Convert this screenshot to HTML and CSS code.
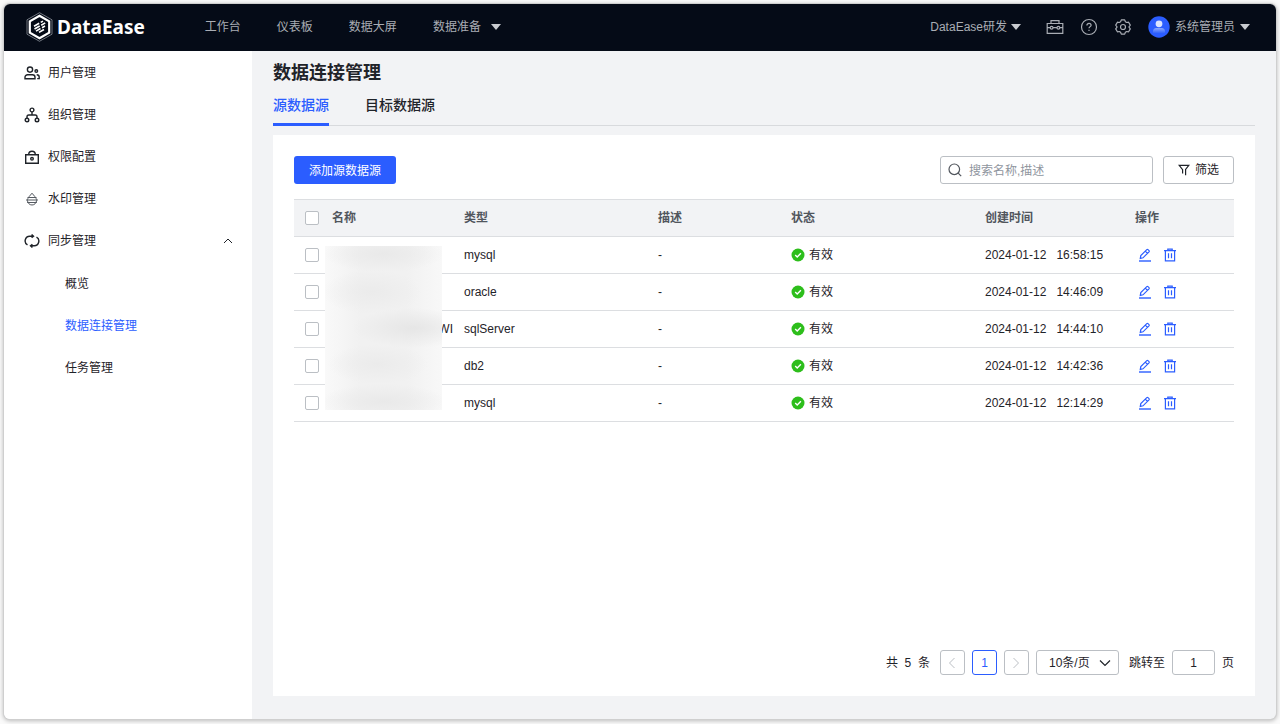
FILE: index.html
```html
<!DOCTYPE html>
<html lang="zh-CN">
<head>
<meta charset="utf-8">
<meta name="viewport" content="width=device-width, initial-scale=1">
<title>DataEase</title>
<link rel="stylesheet" href="styles.css">
</head>
<body>
<svg class="sprite" aria-hidden="true">
  <symbol id="ok" viewBox="0 0 14 14"><circle cx="7" cy="7" r="6.5" fill="#2dbe1b" stroke="none"/><path d="M4.200 7.100l2 1.900 3.700-3.800" fill="none" stroke="#fff" stroke-width="1.400"/></symbol>
  <symbol id="edit" viewBox="0 0 14 14"><path d="M1 13h12" stroke-width="1.400"/><path d="M2.300 10.400l.5-2.800 6-6a.9.9 0 0 1 1.200 0l1 1a.9.9 0 0 1 0 1.200l-6 6zM7.300 3.200l2.100 2.100"/></symbol>
  <symbol id="trash" viewBox="0 0 14 14"><path d="M1 2.700h12M4.800 2.500V1.200h4.400v1.300M2.400 2.800v10h9.200v-10M5.500 5.200v5M8.500 5.200v5"/></symbol>
</svg>
<div class="window">
  <header class="topbar">
    <a class="logo" href="#">
      <svg width="27" height="30" viewBox="0 0 27 30" fill="none"><path d="M13.500.7l12.500 7.100v14.400l-12.500 7.100L1 22.200V7.800z" stroke="#8d929b" stroke-width=".8"/><path d="M13.500 3.800l9.700 5.600v11.200l-9.700 5.600-9.700-5.600V9.400z" stroke="#fff" stroke-width="2.200"/><path d="M8 14.300l5.200-3M14.700 10.400l2.300-1.300M8.500 17l5.200-3M15.200 13.200l4-2.300M10 19.100l4.500-2.600M16 15.700l3-1.700M13 20.400l5-2.900" stroke="#fff" stroke-width="1.600"/></svg>
      <span>DataEase</span>
    </a>
    <nav class="nav">
      <a href="#">工作台</a>
      <a href="#">仪表板</a>
      <a href="#">数据大屏</a>
      <a href="#">数据准备<i class="caret"></i></a>
    </nav>
    <div class="tools">
      <button class="org">DataEase研发<i class="caret"></i></button>
      <button aria-label="工具箱"><svg width="18" height="16" viewBox="0 0 18 16"><path d="M1.200 4.500h15.600v9.800H1.200zM5 4.500V1.600h8v2.900M1.500 8.700h2.700M7 8.700h4M13.800 8.700h2.700"/><circle cx="5.600" cy="8.700" r="1.400"/><circle cx="12.400" cy="8.700" r="1.400"/></svg></button>
      <button aria-label="帮助"><svg width="18" height="18" viewBox="0 0 18 18"><circle cx="9" cy="9" r="7.500"/><path d="M6.900 7.400c0-1.300.9-2.100 2.100-2.100s2.100.8 2.100 1.900c0 1.400-2.100 1.500-2.100 3.100M9 11.800v1.300"/></svg></button>
      <button aria-label="设置"><svg width="18" height="18" viewBox="0 0 18 18"><path d="M7.300 1.900h3.400l.7 1.800 1.300.8 1.900-.3 1.700 2.900L15.100 8.600v.8l1.200 1.500-1.700 2.900-1.900-.3-1.300.8-.7 1.800H7.300l-.7-1.800-1.300-.8-1.900.3-1.700-2.900 1.200-1.500v-.8L1.700 7.100l1.700-2.900 1.900.3 1.300-.8z" stroke-linejoin="round"/><circle cx="9" cy="9" r="2.500"/></svg></button>
      <button class="user">
        <svg width="22" height="22" viewBox="0 0 22 22"><defs><linearGradient id="b" x2="0" y2="1"><stop stop-color="#8eaaff"/><stop offset="1" stop-color="#3464fa"/></linearGradient></defs><circle cx="11" cy="11" r="10.700" fill="#2b5dff" stroke="none"/><path d="M5 17v-1.500a3.500 3.500 0 0 1 3.500-3.500h5a3.500 3.500 0 0 1 3.500 3.500V17z" fill="url(#b)" stroke="none"/><circle cx="11" cy="7.800" r="3.400" fill="#dce5ff" stroke="none"/></svg>
        系统管理员<i class="caret"></i></button>
    </div>
  </header>
  <div class="body">
    <aside class="sidebar">
      <ul class="menu">
        <li><a href="#"><svg viewBox="0 0 16 16"><circle cx="6" cy="4.600" r="2.600"/><path d="M1 13.800v-1.500A2.600 2.600 0 0 1 3.600 9.700h4.800a2.600 2.600 0 0 1 2.600 2.600v1.500zM12.700 9.800c1.600 0 2.500.9 2.500 2.300v1.500h-2"/><circle cx="12.300" cy="6" r="1.300"/></svg>用户管理</a></li>
        <li><a href="#"><svg viewBox="0 0 16 16"><circle cx="8" cy="3" r="1.900"/><circle cx="3" cy="13" r="1.800"/><circle cx="13" cy="13" r="1.800"/><path d="M8 5v3M3 11V9.800A1.800 1.800 0 0 1 4.800 8h6.400A1.800 1.800 0 0 1 13 9.800V11"/></svg>组织管理</a></li>
        <li><a href="#"><svg viewBox="0 0 16 16"><path d="M1.700 5.800h12.600v8.500H1.700zM4.700 5.500a3.300 3.300 0 0 1 6.600 0"/><circle cx="8" cy="9.800" r="1.300"/></svg>权限配置</a></li>
        <li><a href="#"><svg class="thin" viewBox="0 0 16 16"><path d="M5.200 5.500L8 2.200l2.800 3.300M3.500 6.500h9M2 9h12M3.200 11.500h9.600M5.200 5.500C4 7 3.500 8 3.500 9.500a4.500 4.500 0 0 0 9 0C12.500 8 12 7 10.800 5.500"/></svg>水印管理</a></li>
        <li><a href="#"><svg viewBox="0 0 16 16"><path d="M9.500 3.300H5.700a4.600 4.600 0 0 0-2.200 8.600M6.500 12.700h3.800a4.600 4.600 0 0 0 2.200-8.600M7.600 1.500l1.900 1.800-1.900 1.400M8.400 11.300l-1.900 1.400 1.900 1.800"/></svg>同步管理<svg class="fold" viewBox="0 0 10 6"><path d="M1 5l4-4 4 4"/></svg></a>
          <ul class="submenu">
            <li><a href="#">概览</a></li>
            <li><a class="active" href="#">数据连接管理</a></li>
            <li><a href="#">任务管理</a></li>
          </ul>
        </li>
      </ul>
    </aside>
    <main class="main">
      <h1>数据连接管理</h1>
      <div class="tabs" role="tablist">
        <button class="tab selected" role="tab" aria-selected="true">源数据源</button>
        <button class="tab" role="tab" aria-selected="false">目标数据源</button>
      </div>
      <section class="card">
        <div class="actions">
          <button class="primary">添加源数据源</button>
          <label class="search"><svg viewBox="0 0 14 14"><circle cx="6.300" cy="6.300" r="5.300"/><path d="M10.200 10.200l3 3"/></svg><input type="text" placeholder="搜索名称,描述" aria-label="搜索名称,描述"></label>
          <button class="filter"><svg viewBox="0 0 12 12"><path d="M4.600 9.500V5.600L1.200 1.400h9.600L7.600 5.400v5.800"/></svg>筛选</button>
        </div>
        <div class="listing">
          <table>
            <colgroup><col class="c-check"><col class="c-name"><col class="c-wide"><col class="c-desc"><col class="c-wide"><col class="c-time"><col class="c-ops"></colgroup>
            <thead><tr><th><input type="checkbox" aria-label="全选"></th><th>名称</th><th>类型</th><th>描述</th><th>状态</th><th>创建时间</th><th>操作</th></tr></thead>
            <tbody>
              <tr><td><input type="checkbox" aria-label="选择第1行"></td><td></td><td>mysql</td><td>-</td><td><span class="status"><svg><use href="#ok"/></svg>有效</span></td><td><span class="time"><span>2024-01-12</span><span>16:58:15</span></span></td><td><span class="ops"><button aria-label="编辑"><svg><use href="#edit"/></svg></button><button aria-label="删除"><svg><use href="#trash"/></svg></button></span></td></tr>
              <tr><td><input type="checkbox" aria-label="选择第2行"></td><td></td><td>oracle</td><td>-</td><td><span class="status"><svg><use href="#ok"/></svg>有效</span></td><td><span class="time"><span>2024-01-12</span><span>14:46:09</span></span></td><td><span class="ops"><button aria-label="编辑"><svg><use href="#edit"/></svg></button><button aria-label="删除"><svg><use href="#trash"/></svg></button></span></td></tr>
              <tr><td><input type="checkbox" aria-label="选择第3行"></td><td class="name">WI</td><td>sqlServer</td><td>-</td><td><span class="status"><svg><use href="#ok"/></svg>有效</span></td><td><span class="time"><span>2024-01-12</span><span>14:44:10</span></span></td><td><span class="ops"><button aria-label="编辑"><svg><use href="#edit"/></svg></button><button aria-label="删除"><svg><use href="#trash"/></svg></button></span></td></tr>
              <tr><td><input type="checkbox" aria-label="选择第4行"></td><td></td><td>db2</td><td>-</td><td><span class="status"><svg><use href="#ok"/></svg>有效</span></td><td><span class="time"><span>2024-01-12</span><span>14:42:36</span></span></td><td><span class="ops"><button aria-label="编辑"><svg><use href="#edit"/></svg></button><button aria-label="删除"><svg><use href="#trash"/></svg></button></span></td></tr>
              <tr><td><input type="checkbox" aria-label="选择第5行"></td><td></td><td>mysql</td><td>-</td><td><span class="status"><svg><use href="#ok"/></svg>有效</span></td><td><span class="time"><span>2024-01-12</span><span>12:14:29</span></span></td><td><span class="ops"><button aria-label="编辑"><svg><use href="#edit"/></svg></button><button aria-label="删除"><svg><use href="#trash"/></svg></button></span></td></tr>
            </tbody>
          </table>
          <div class="mask"></div>
        </div>
        <footer class="pager">
          <span class="total">共&nbsp; 5 &nbsp;条</span>
          <button class="page" aria-label="上一页" disabled><svg viewBox="0 0 8 12"><path d="M6.500 1L1.500 6l5 5"/></svg></button>
          <button class="page current">1</button>
          <button class="page" aria-label="下一页" disabled><svg viewBox="0 0 8 12"><path d="M1.500 1l5 5-5 5"/></svg></button>
          <span class="size"><select aria-label="每页条数"><option>10条/页</option></select><svg viewBox="0 0 12 8"><path d="M1 1.500l5 5 5-5"/></svg></span>
          <label for="jump">跳转至</label>
          <input id="jump" type="text" value="1">
          <span>页</span>
        </footer>
      </section>
    </main>
  </div>
</div>
</body>
</html>
```
FILE: styles.css
```css
* { box-sizing: border-box; }
body {
  margin: 0;
  padding: 4px 4px 5px;
  min-height: 100vh;
  display: flex;
  background: #fafafa;
  color: #1f2329;
  font: 12px/20px "Liberation Sans", "Noto Sans CJK SC", sans-serif;
}
.sprite { position: absolute; width: 0; height: 0; }
a { color: inherit; text-decoration: none; }
button, input, select { font: inherit; color: inherit; margin: 0; }
button { padding: 0; border: 0; background: none; cursor: pointer; }
svg { display: block; flex: none; fill: none; stroke: currentColor; stroke-width: 1.2; }
ul { list-style: none; margin: 0; padding: 0; }

.window {
  flex: 1;
  min-width: 0;
  display: flex;
  flex-direction: column;
  border-radius: 6px;
  overflow: hidden;
  background: #f2f3f5;
  box-shadow: 0 0 0 1px #cfcfcf, 0 1px 4px 1px #00000040;
}
.topbar {
  height: 47px;
  display: flex;
  align-items: center;
  padding: 0 26px 1px 22px;
  background: #050b17;
  color: #a9adb4;
}
.logo { display: flex; align-items: center; gap: 4px; color: #fff; font: bold 19px/30px "Noto Sans", sans-serif; }
.nav { display: flex; gap: 36px; margin-left: 60px; }
.nav a, .tools button { display: flex; align-items: center; }
.caret { border: 5px solid transparent; border-top: 6px solid #c8cbd0; border-bottom: 0; }
.nav .caret { margin-left: 10px; }
.tools { display: flex; align-items: center; gap: 16px; margin-left: auto; }
.tools .org { gap: 4px; margin-right: 9px; }
.tools .user { gap: 5px; }

.body { flex: 1; display: flex; }
.sidebar { width: 248px; flex: none; padding-top: 1px; background: #fff; }
.menu a { display: flex; align-items: center; gap: 8px; height: 42px; padding: 0 19px 0 20px; }
.menu svg { width: 16px; height: 16px; stroke-width: 1.4; }
.menu svg.thin { stroke-width: 1; color: #555a61; }
.menu svg.fold { width: 10px; height: 6px; stroke-width: 1; margin-left: auto; }
.submenu { padding-top: 1px; }
.submenu a { padding-left: 61px; }
.submenu .active { color: #2b5dff; }

.main { flex: 1; min-width: 0; display: flex; flex-direction: column; padding: 9px 21px 23px; }
h1 { margin: 0; font-size: 18px; line-height: 26px; font-weight: 600; }
.tabs { display: flex; gap: 36px; height: 40px; border-bottom: 1px solid #d8dadd; }
.tab { height: 40px; border-bottom: 3px solid transparent; font-size: 14px; font-weight: 500; }
.tab.selected { color: #2b5dff; border-color: #2b5dff; }
.card { flex: 1; display: flex; flex-direction: column; margin-top: 9px; padding: 21px; background: #fff; }
.actions { display: flex; gap: 10px; }
.primary { height: 28px; padding: 1px 15px 0; border-radius: 3px; background: #2b5dff; color: #fff; }
.search, .filter { display: flex; align-items: center; height: 28px; border: 1px solid #bbbfc4; border-radius: 3px; }
.search { width: 213px; margin-left: auto; padding: 0 7px; gap: 7px; color: #51565d; }
.search svg { width: 14px; height: 14px; }
.search input { flex: 1; min-width: 0; border: 0; padding: 1px 0 0; outline: 0; background: none; }
.search input::placeholder { color: #8f959e; opacity: 1; }
.filter { width: 71px; justify-content: center; gap: 5px; }
.filter svg { width: 12px; height: 12px; }

.listing { position: relative; margin-top: 15px; }
table { width: 100%; table-layout: fixed; border-collapse: separate; border-spacing: 0; }
.c-check { width: 38px; }
.c-name { width: 132px; }
.c-wide { width: 194px; }
.c-desc { width: 133px; }
.c-time { width: 150px; }
.c-ops { width: 99px; }
th, td { height: 37px; padding: 0; text-align: left; border-bottom: 1px solid #dcdee1; }
th { height: 38px; background: #f2f3f5; border-top: 1px solid #dcdee1; color: #51565d; font-weight: 600; }
th:first-child, td:first-child { padding: 0 0 1px 11px; }
td.name { padding-right: 11px; text-align: right; }
input[type="checkbox"] {
  appearance: none;
  display: block;
  width: 14px;
  height: 14px;
  border: 1px solid #bbbfc4;
  border-radius: 2px;
  background: #fff;
}
.status, .time, .ops { display: flex; align-items: center; }
.status { gap: 4px; }
.time { gap: 10px; }
.ops { gap: 11px; padding-left: 3px; color: #2b5dff; }
.status svg, .ops svg { width: 14px; height: 14px; }
.mask {
  position: absolute;
  left: 31px;
  top: 47px;
  width: 117px;
  height: 164px;
  background:
    radial-gradient(60px 18px at 50% 5%, #e9e9e9, #e9e9e900),
    radial-gradient(50px 22px at 40% 28%, #ebebeb, #ebebeb00),
    radial-gradient(60px 20px at 75% 50%, #e6e6e6, #e6e6e600),
    radial-gradient(50px 20px at 45% 72%, #ebebeb, #ebebeb00),
    radial-gradient(64px 18px at 50% 95%, #e9e9e9, #e9e9e900),
    linear-gradient(90deg, #f9f9f9, #f1f1f1 30%, #f1f1f1 70%, #f8f8f8);
}

.pager { display: flex; align-items: center; justify-content: flex-end; gap: 7px; margin-top: auto; }
.page, .size, #jump { height: 25px; border: 1px solid #bbbfc4; border-radius: 3px; background: #fff; }
.page { width: 25px; display: flex; align-items: center; justify-content: center; color: #bbbfc4; }
.page svg { width: 8px; height: 12px; stroke-width: 1; }
.page.current { color: #2b5dff; border-color: #2b5dff; }
.total { margin-right: 3px; }
.size { display: flex; align-items: center; width: 83px; padding: 0 7px 0 12px; margin-right: 3px; }
.size select { flex: 1; min-width: 0; appearance: none; border: 0; padding: 0; background: none; outline: 0; }
.size svg { width: 12px; height: 8px; }
#jump { width: 43px; padding: 0; text-align: center; }
```
